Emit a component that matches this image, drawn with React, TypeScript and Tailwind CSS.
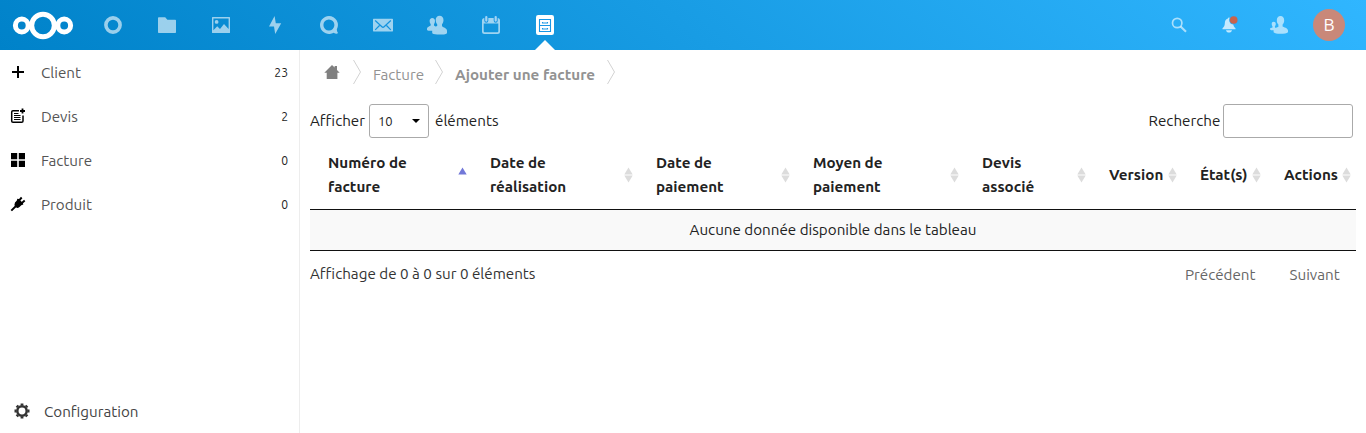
import React from "react";

type IconProps = { children: React.ReactNode; className?: string };

const Glyph = ({ children, className = "" }: IconProps) => (
  <svg viewBox="0 0 20 20" width="20" height="20" className={className} fill="currentColor">
    {children}
  </svg>
);

const apps: { name: string; icon: React.ReactNode }[] = [
  { name: "dashboard", icon: <circle cx="10" cy="10" r="7.1" fill="none" stroke="currentColor" strokeWidth="3.6" /> },
  { name: "files", icon: <path d="M1.8 2.2h6.4l2.2 2.6h7.8a.8.8 0 0 1 .8.8v11.6a.8.8 0 0 1-.8.8H1.8a.8.8 0 0 1-.8-.8V3a.8.8 0 0 1 .8-.8z" /> },
  {
    name: "photos",
    icon: (
      <path
        fillRule="evenodd"
        d="M1.6 2h16.800a.6.6 0 0 1 .6.6v14.800a.6.6 0 0 1-.6.6H1.600a.6.6 0 0 1-.6-.6V2.600a.6.6 0 0 1 .6-.6zM2.400 3.400v11.800l3.800-4 2.800 2.800 4-5 4.600 5V3.400zM5.600 5a1.900 1.900 0 1 1 0 3.800 1.900 1.900 0 0 1 0-3.800z"
      />
    ),
  },
  { name: "activity", icon: <path d="M9.600 1 4 11.600h5L10.200 19 16.200 8.200h-5.400z" /> },
  {
    name: "talk",
    icon: (
      <path
        fillRule="evenodd"
        d="M10 1a9 9 0 0 1 7.800 13.400c.1 1.500.5 2.600 1.200 3.600-.5.900-2.700 1-4.300-.3A9 9 0 1 1 10 1zm-.1 3.500a5.500 5.500 0 1 0 0 11 5.500 5.500 0 0 0 0-11z"
      />
    ),
  },
  {
    name: "mail",
    icon: (
      <>
        <rect x="0" y="3.800" width="20" height="12.600" rx=".6" />
        <path d="m2.200 5.500 6.700 6.300q1.100 1 2.200 0l6.700-6.300M2.200 14.900l4.300-4.400M17.800 14.900l-4.300-4.400" fill="none" stroke="#1393df" strokeWidth="1.200" />
      </>
    ),
  },
  {
    name: "contacts",
    icon: (
      <path d="M12.600.800c2.400 0 3.900 1.700 3.900 4.200 0 2-.7 3.200-1.500 4.300v1.900c.8 1 5 1.700 5 4.600v2.400c-1.300 1.200-4 1.400-7.400 1.400s-6-.4-7.400-1.400v-2.400H1.500C.4 15.500 0 15.200 0 14.800v-1.300c0-1.600 2.800-2.100 3.700-2.900V9.300C3 8.400 2.600 7.300 2.600 6c0-1.800 1-3.100 2.700-3.100S8 4.200 8 6c0 1.300-.3 2.400-1 3.300v1.300l1.400.9c.8-.2 1.500-.2 1.800-.5V9.300C9.400 8.200 8.700 7 8.700 5c0-2.500 1.500-4.200 3.900-4.200z" />
    ),
  },
  {
    name: "calendar",
    icon: (
      <>
        <path fillRule="evenodd" d="M3.500 3h13A2.500 2.500 0 0 1 19 5.500v11a2.500 2.500 0 0 1-2.500 2.500h-13A2.500 2.500 0 0 1 1 16.500v-11A2.500 2.500 0 0 1 3.500 3zM2.700 8.500v7.800q0 1 1 1h12.600q1 0 1-1V8.500z" />
        <path d="M5.300 2v3.800M14.700 2v3.800" stroke="#1695e3" strokeWidth="4" strokeLinecap="round" />
        <path d="M5.300 2v3.600M14.700 2v3.600" stroke="currentColor" strokeWidth="2.200" strokeLinecap="round" />
      </>
    ),
  },
  {
    name: "invoices",
    icon: (
      <>
        <rect x="1" y="0" width="18" height="20" rx="2.200" />
        <path d="M4.500 4.500h11v6h-11zM4.500 10.500h11v6h-11z" fill="none" stroke="#1897e5" strokeWidth="1.100" />
        <path d="M7.500 7v1h5V7M7.500 13v1h5v-1" fill="none" stroke="#1897e5" strokeWidth="1.100" />
      </>
    ),
  },
];

const TopBar = () => (
  <header className="flex h-[50px] shrink-0 items-center justify-between bg-[linear-gradient(40deg,#0082c9_0%,#30b6ff_100%)] pl-3 pr-[12px]">
    <div className="flex h-full items-center">
      <svg viewBox="0 0 62 30" width="62" height="30" fill="none" stroke="#fff" strokeWidth="5" className="mr-[12px]">
        <circle cx="31" cy="15.500" r="11.300" />
        <circle cx="9.800" cy="15.500" r="6.400" />
        <circle cx="52.200" cy="15.500" r="6.400" />
      </svg>
      <nav className="flex h-full">
        {apps.map((app) => {
          const active = app.name === "invoices";
          return (
            <a key={app.name} className="relative flex h-full w-[54px] items-center justify-center" aria-label={app.name}>
              <Glyph className={active ? "text-white" : "text-white/60"}>{app.icon}</Glyph>
              {active && (
                <span className="absolute bottom-0 left-[17px] h-[10px] w-[20px] bg-white [clip-path:polygon(50%_0,100%_100%,0_100%)]" />
              )}
            </a>
          );
        })}
      </nav>
    </div>
    <div className="flex h-full items-center text-white/60">
      <span className="flex w-[50px] justify-center">
        <svg viewBox="0 0 16 16" width="16" height="16" fill="none" stroke="currentColor">
          <circle cx="6.200" cy="6" r="4.700" strokeWidth="1.700" />
          <path d="m9.600 9.400 5.400 5.400" strokeWidth="2.100" />
        </svg>
      </span>
      <span className="flex w-[50px] justify-center">
        <svg viewBox="0 0 18 18" width="18" height="18">
          <path d="M9 1.600c.7 0 1 .3 1.100.9 2.300.7 3 2.500 3.100 4.900.1 2.500.8 3.500 2.300 4.800v1H2.500v-1C4 10.900 4.700 9.900 4.800 7.400c.1-2.400.8-4.200 3.100-4.900.1-.6.400-.9 1.100-.9zM6 14.200h6c-.3 1.500-1.500 2.300-3 2.300s-2.700-.8-3-2.300z" fill="#fff" fillOpacity=".72" />
          <circle cx="13.700" cy="4" r="4.600" fill="#2dabf7" />
          <circle cx="13.700" cy="4" r="3.800" fill="#c9634b" />
        </svg>
      </span>
      <span className="flex w-[50px] justify-center">
        <svg viewBox="0 0 18 18" width="18" height="18" fill="currentColor">
          <path d="M10.500 0c2.300 0 3.700 1.700 3.700 4.300 0 2-.6 3.300-1.600 4.300v2c.8.800 5.400 1.400 5.400 4.200v1.400c-1.300 1.200-3.800 1.600-7.500 1.600s-5.500-.4-6.900-1.600v-2H1.200Q0 14.100 0 13c0-1 1.700-1.200 2.500-1.600v-1C2 9.700 1.700 9 1.700 8c0-1.400.8-2.300 2-2.300s2.100.9 2.100 2.300c0 1-.3 1.700-.9 2.300v1l.9.600c1-.4 2.200-.6 2.600-1.100V8.600C7.400 7.600 6.800 6.300 6.800 4.300c0-2.600 1.400-4.300 3.700-4.300z" />
        </svg>
      </span>
      <span className="flex w-[50px] justify-center">
        <span className="flex size-8 items-center justify-center rounded-full bg-[#c98879] text-[17.600px] text-white">B</span>
      </span>
    </div>
  </header>
);

const menu = [
  {
    label: "Client",
    count: 23,
    icon: <path d="M8 2v12M2 8h12" stroke="#000" strokeWidth="2" />,
  },
  {
    label: "Devis",
    count: 2,
    icon: (
      <g fill="none" stroke="#000">
        <path d="M9 2.700H3Q1.700 2.700 1.700 4v9q0 1.300 1.300 1.300h8.700q1.300 0 1.300-1.300V7.500" strokeWidth="1.500" />
        <path d="M12.500 .500v5M10 3h5" strokeWidth="1.800" />
        <path d="M4 5.500h4.500M4 7.500h6.500M4 9.500h6.500M4 11.500h6.500" strokeWidth="1.200" />
      </g>
    ),
  },
  {
    label: "Facture",
    count: 0,
    icon: <path d="M1 1h6.200v6.200H1zM8.800 1H15v6.200H8.800zM1 8.800h6.200V15H1zM8.800 8.800H15V15H8.800z" />,
  },
  {
    label: "Produit",
    count: 0,
    icon: (
      <>
        <path d="m5 6.500 1.700-1.800.7-2 1.500.4 4 4 .4 1.500-2 .700L9.500 11q-2.300 1.700-4 .1-1.900-2-.5-4.600z" />
        <path d="M6.500 9.500 1.300 14.700M8.700 4.900l3-3.400M11.300 7.500l3.400-3" stroke="#000" strokeWidth="1.900" fill="none" />
      </>
    ),
  },
];

const Sidebar = () => (
  <aside className="flex w-[300px] shrink-0 flex-col justify-between border-r border-[#ededed]">
    <ul>
      {menu.map((m) => (
        <li key={m.label} className="flex h-11 items-center pl-[10px] pr-[11px]">
          <svg viewBox="0 0 16 16" width="16" height="16">{m.icon}</svg>
          <span className="ml-[15px] mt-px flex-1 text-[15.200px] text-[#555]">{m.label}</span>
          <span className="mt-px text-[12.160px] text-[#222]">{m.count}</span>
        </li>
      ))}
    </ul>
    <div className="flex h-11 items-center pl-[14px]">
      <svg viewBox="0 0 16 16" width="16" height="16" fill="none" stroke="#333">
        <circle cx="8" cy="8" r="4.700" strokeWidth="2.500" />
        <path d="M8 .500v2M8 13.500v2M.500 8h2M13.500 8h2M2.700 2.700l1.400 1.400M11.900 11.900l1.400 1.400M2.700 13.300l1.400-1.400M11.900 4.100l1.400-1.400" strokeWidth="2.800" />
      </svg>
      <span className="ml-[14px] mt-px text-[15.200px] text-[#444]">Configuration</span>
    </div>
  </aside>
);

const Chevron = () => (
  <svg viewBox="0 0 8 24" width="8" height="24" fill="none" stroke="#d2d2d2">
    <path d="m.5 0 7 12-7 12" />
  </svg>
);

const columns = [
  { lines: ["Numéro de", "facture"], width: "w-[162px]" },
  { lines: ["Date de", "réalisation"], width: "w-[166px]" },
  { lines: ["Date de", "paiement"], width: "w-[157px]" },
  { lines: ["Moyen de", "paiement"], width: "w-[169px]" },
  { lines: ["Devis", "associé"], width: "w-[127px]" },
  { lines: ["Version"], width: "w-[91px]" },
  { lines: ["État(s)"], width: "w-[84px]" },
  { lines: ["Actions"], width: "w-[90px]" },
];

const Sort = ({ active }: { active: boolean }) => (
  <svg viewBox="0 0 9 16" width="9" height="16" className="shrink-0">
    <path d="M4.500.500 8.700 7.500H.300z" fill={active ? "#7278d8" : "#dcdcdc"} />
    {!active && <path d="M4.500 15.500.300 8.500h8.400z" fill="#dcdcdc" />}
  </svg>
);

export default function App() {
  return (
    <div className="flex h-[433px] w-full flex-col overflow-hidden bg-white font-['Ubuntu','Noto_Sans',sans-serif] text-[15.200px] leading-6 text-[#222]">
      <TopBar />
      <div className="flex min-h-0 flex-1">
        <Sidebar />
        <main className="flex-1 pl-[10px] pr-[10px]">
          <div className="flex h-[44px] items-center text-[#929292]">
            <svg viewBox="0 0 16 16" width="16" height="16" className="ml-[14px]" fill="#808080">
              <path d="M8 1 .300 8.800h2.400V15h10.700V8.800h2.300L13 6V2h-2.400v1.600z" />
            </svg>
            <span className="ml-[13px] flex"><Chevron /></span>
            <span className="ml-3 mt-[5px] w-[51px] whitespace-nowrap">Facture</span>
            <span className="ml-[11px] flex"><Chevron /></span>
            <span className="ml-3 mt-[5px] w-[141px] whitespace-nowrap font-bold">Ajouter une facture</span>
            <span className="ml-[11px] flex"><Chevron /></span>
          </div>
          <div className="mt-[10px] flex h-[34px] items-center justify-between pr-[3px]">
            <label className="flex items-center">
              <span className="w-[59px] whitespace-nowrap">Afficher</span>
              <span className="flex h-[34px] w-[60px] items-center justify-between rounded-[3px] border border-[#aaa] pl-2 pr-[8px] text-[13px]">
                10
                <svg viewBox="0 0 8 4" width="8" height="4"><path d="M0 0h8L4 4z" /></svg>
              </span>
              <span className="ml-[6px]">éléments</span>
            </label>
            <label className="flex items-center">
              <span className="w-[74.500px] whitespace-nowrap">Recherche</span>
              <input className="h-[34px] w-[130px] rounded-[3px] border border-[#aaa] bg-white outline-none" />
            </label>
          </div>
          <table className="mt-[3px] w-[1046px] table-fixed border-collapse">
            <thead>
              <tr className="h-[68px] border-b border-[#111]">
                {columns.map((c, i) => (
                  <th key={i} className={`${c.width} p-0 pl-[18px] pr-[5px] pt-px text-left font-bold`}>
                    <div className="flex items-center justify-between whitespace-nowrap">
                      <span>{c.lines.map((l) => <span key={l} className="block">{l}</span>)}</span>
                      <Sort active={i === 0} />
                    </div>
                  </th>
                ))}
              </tr>
            </thead>
            <tbody>
              <tr className="h-[41px] border-b border-[#111] bg-[#f9f9f9]">
                <td colSpan={8} className="p-0 text-center">Aucune donnée disponible dans le tableau</td>
              </tr>
            </tbody>
          </table>
          <div className="mt-[11px] flex justify-between pr-4">
            <span className="text-[#333]">Affichage de 0 à 0 sur 0 éléments</span>
            <span className="mt-px flex text-[#666]">
              <span className="w-[104.500px]">Précédent</span>
              <span className="w-[50.500px] whitespace-nowrap">Suivant</span>
            </span>
          </div>
        </main>
      </div>
    </div>
  );
}
